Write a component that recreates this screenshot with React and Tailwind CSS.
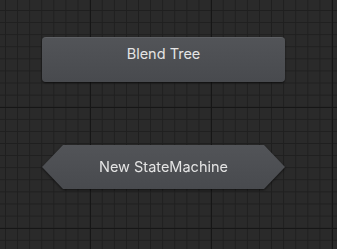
import React from "react";

export default function App() {
  return (
    <div className="relative w-[337px] h-[249px] overflow-hidden bg-[#2a2a2a] font-['Inter','Noto_Sans',sans-serif]">
      {/* minor grid */}
      <div className="w-full h-full bg-[linear-gradient(to_right,#1f1f1f_1px,transparent_1px),linear-gradient(to_bottom,#1f1f1f_1px,transparent_1px)] bg-[size:12.1px_12.1px] bg-[position:5px_10px]">
        {/* major grid */}
        <div className="w-full h-full bg-[linear-gradient(to_right,#161616_1px,transparent_1px),linear-gradient(to_bottom,#161616_1px,transparent_1px)] bg-[size:121px_121px] bg-[position:90px_107px]">
          <div className="flex flex-col pt-[37px] pl-[42px] gap-[63px]">
            <div className="w-[243px] h-[45px] rounded-[4px] bg-gradient-to-b from-[#525458] to-[#484a4e] border-t border-[#5e6064] shadow-[0_1px_2px_rgba(0,0,0,0.6)] flex justify-center pt-[5px] text-[14.5px] text-[#e4e4e4]">
              Blend Tree
            </div>
            <div className="w-[243px] h-[44px] drop-shadow-[0_1px_1px_rgba(0,0,0,0.6)]">
              <div className="w-full h-full bg-gradient-to-b from-[#525458] to-[#484a4e] [clip-path:polygon(21px_0,222px_0,243px_22px,222px_44px,21px_44px,0_22px)] flex items-center justify-center text-[14.5px] text-[#e4e4e4]">
                New StateMachine
              </div>
            </div>
          </div>
        </div>
      </div>
    </div>
  );
}
